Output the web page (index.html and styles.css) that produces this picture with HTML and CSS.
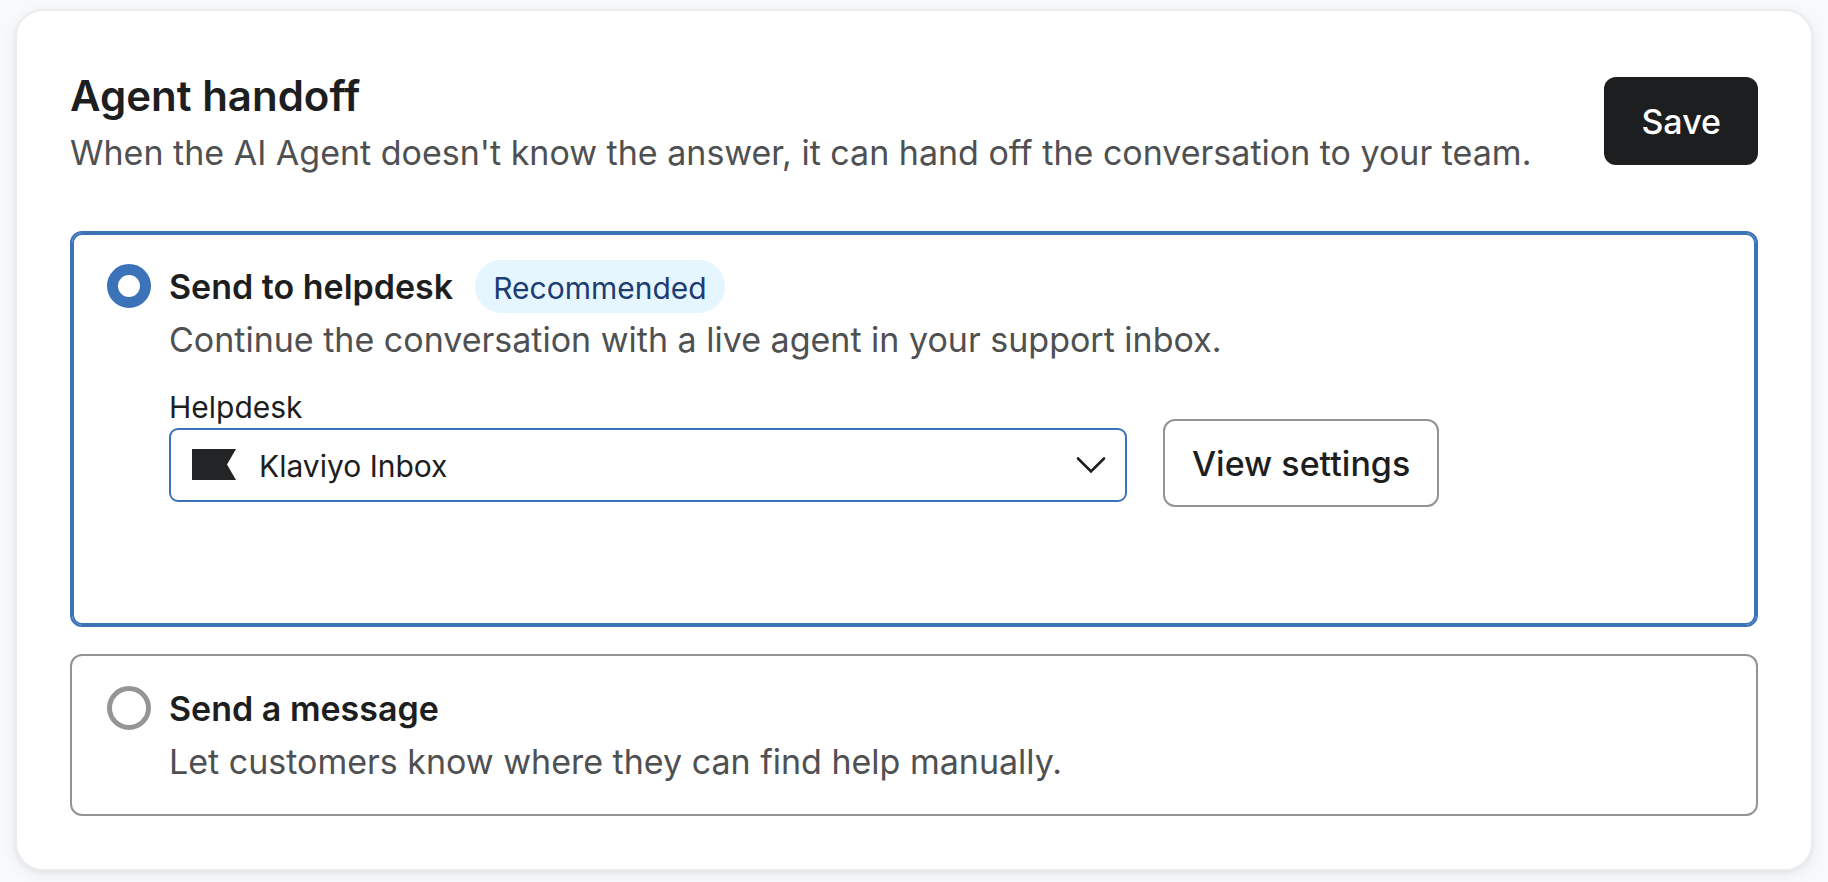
FILE: index.html
```html
<!DOCTYPE html>
<html lang="en">
<head>
<meta charset="utf-8">
<title>Agent handoff</title>
<link rel="stylesheet" href="styles.css">
</head>
<body>
<main class="card">
  <header class="card-header">
    <div class="card-heading">
      <h1 class="card-title">Agent handoff</h1>
      <p class="text-muted">When the AI Agent doesn't know the answer, it can hand off the conversation to your team.</p>
    </div>
    <button class="button button-primary" type="button">Save</button>
  </header>
  <form class="options">
    <section class="option option-selected">
      <input class="radio" type="radio" name="handoff" id="helpdesk-option" checked>
      <div class="option-body">
        <div class="option-heading">
          <label class="option-title" for="helpdesk-option">Send to helpdesk</label>
          <span class="badge">Recommended</span>
        </div>
        <p class="text-muted">Continue the conversation with a live agent in your support inbox.</p>
        <div class="helpdesk-row">
          <div class="field">
            <label class="field-label" for="helpdesk">Helpdesk</label>
            <div class="select-wrap">
              <select class="select" id="helpdesk">
                <option>Klaviyo Inbox</option>
              </select>
              <svg class="select-logo" viewBox="0 0 44 31" aria-hidden="true"><path d="M0 0H44L35 15.500L44 31H0Z" fill="#232426"/></svg>
              <svg class="select-chevron" viewBox="0 0 30 18" aria-hidden="true"><path d="M2 2.500L15 15.500L28 2.500" fill="none" stroke="#1d1e20" stroke-width="2.600" stroke-linecap="round"/></svg>
            </div>
          </div>
          <button class="button button-secondary" type="button">View settings</button>
        </div>
      </div>
    </section>
    <section class="option">
      <input class="radio" type="radio" name="handoff" id="message-option">
      <div class="option-body">
        <div class="option-heading">
          <label class="option-title" for="message-option">Send a message</label>
        </div>
        <p class="text-muted">Let customers know where they can find help manually.</p>
      </div>
    </section>
  </form>
</main>
</body>
</html>
```
FILE: styles.css
```css
* {
  box-sizing: border-box;
}

body {
  margin: 0;
  padding: 9px 15px 11px;
  background: #f8f9fb;
  color: #1d1e20;
  font-family: Inter, "Liberation Sans", sans-serif;
  font-size: 34px;
  line-height: 53px;
}

h1,
p {
  margin: 0;
}

button,
select {
  font: inherit;
  color: inherit;
}

.card {
  padding: 56px 53px 53px;
  border: 2px solid #ebecee;
  border-radius: 28px;
  background: #fff;
  box-shadow: 0 2px 4px rgba(30, 40, 60, 0.06), 0 4px 16px rgba(30, 40, 60, 0.06);
}

.card-header {
  display: flex;
  justify-content: space-between;
  align-items: flex-start;
  gap: 32px;
  margin-bottom: 52px;
}

.card-title {
  margin-bottom: 2px;
  font-size: 42px;
  font-weight: 600;
  line-height: 57px;
}

.text-muted {
  color: #4f5052;
}

.button {
  flex: none;
  height: 88px;
  border-radius: 12px;
  font-weight: 500;
}

.button-primary {
  margin-top: 10px;
  padding: 0 37px;
  border: 0;
  background: #1d1e20;
  color: #fff;
}

.button-secondary {
  padding: 0 27px;
  border: 2px solid #929394;
  background: #fff;
}

.options {
  display: flex;
  flex-direction: column;
  gap: 27px;
}

.option {
  display: flex;
  align-items: flex-start;
  gap: 18px;
  padding: 26px 35px;
  border: 2px solid #929394;
  border-radius: 12px;
}

.option-selected {
  padding-top: 27px;
  border-color: #3b72b8;
  box-shadow: inset 0 0 0 2px #3b72b8;
}

.radio {
  flex: none;
  appearance: none;
  width: 44px;
  height: 44px;
  margin: 4px 0 0;
  border: 5px solid #949596;
  border-radius: 50%;
  background: #fff;
}

.radio:checked {
  border: 11px solid #3b72b8;
}

.option-body {
  flex: 1;
  min-width: 0;
}

.option-heading {
  display: flex;
  align-items: center;
  gap: 22px;
}

.option-title {
  font-weight: 600;
}

.badge {
  padding: 3px 18px 0;
  border-radius: 27px;
  background: #e5f6fe;
  color: #1c3c72;
  font-size: 30px;
  line-height: 50px;
}

.helpdesk-row {
  display: flex;
  align-items: flex-end;
  gap: 36px;
  margin-top: 20px;
  padding-bottom: 92px;
}

.field {
  flex: 0 1 958px;
  min-width: 0;
  padding-bottom: 5px;
  font-size: 30px;
  line-height: 42px;
}

.field-label {
  display: block;
}

.select-wrap {
  position: relative;
}

.select {
  display: block;
  appearance: none;
  width: 100%;
  height: 74px;
  padding: 2px 68px 0 88px;
  border: 2px solid #3b72b8;
  border-radius: 9px;
  background: #fff;
}

.select-logo,
.select-chevron {
  position: absolute;
  pointer-events: none;
}

.select-logo {
  left: 23px;
  top: 21px;
  width: 44px;
  height: 31px;
}

.select-chevron {
  right: 21px;
  top: 28px;
  width: 30px;
  height: 18px;
}
```
